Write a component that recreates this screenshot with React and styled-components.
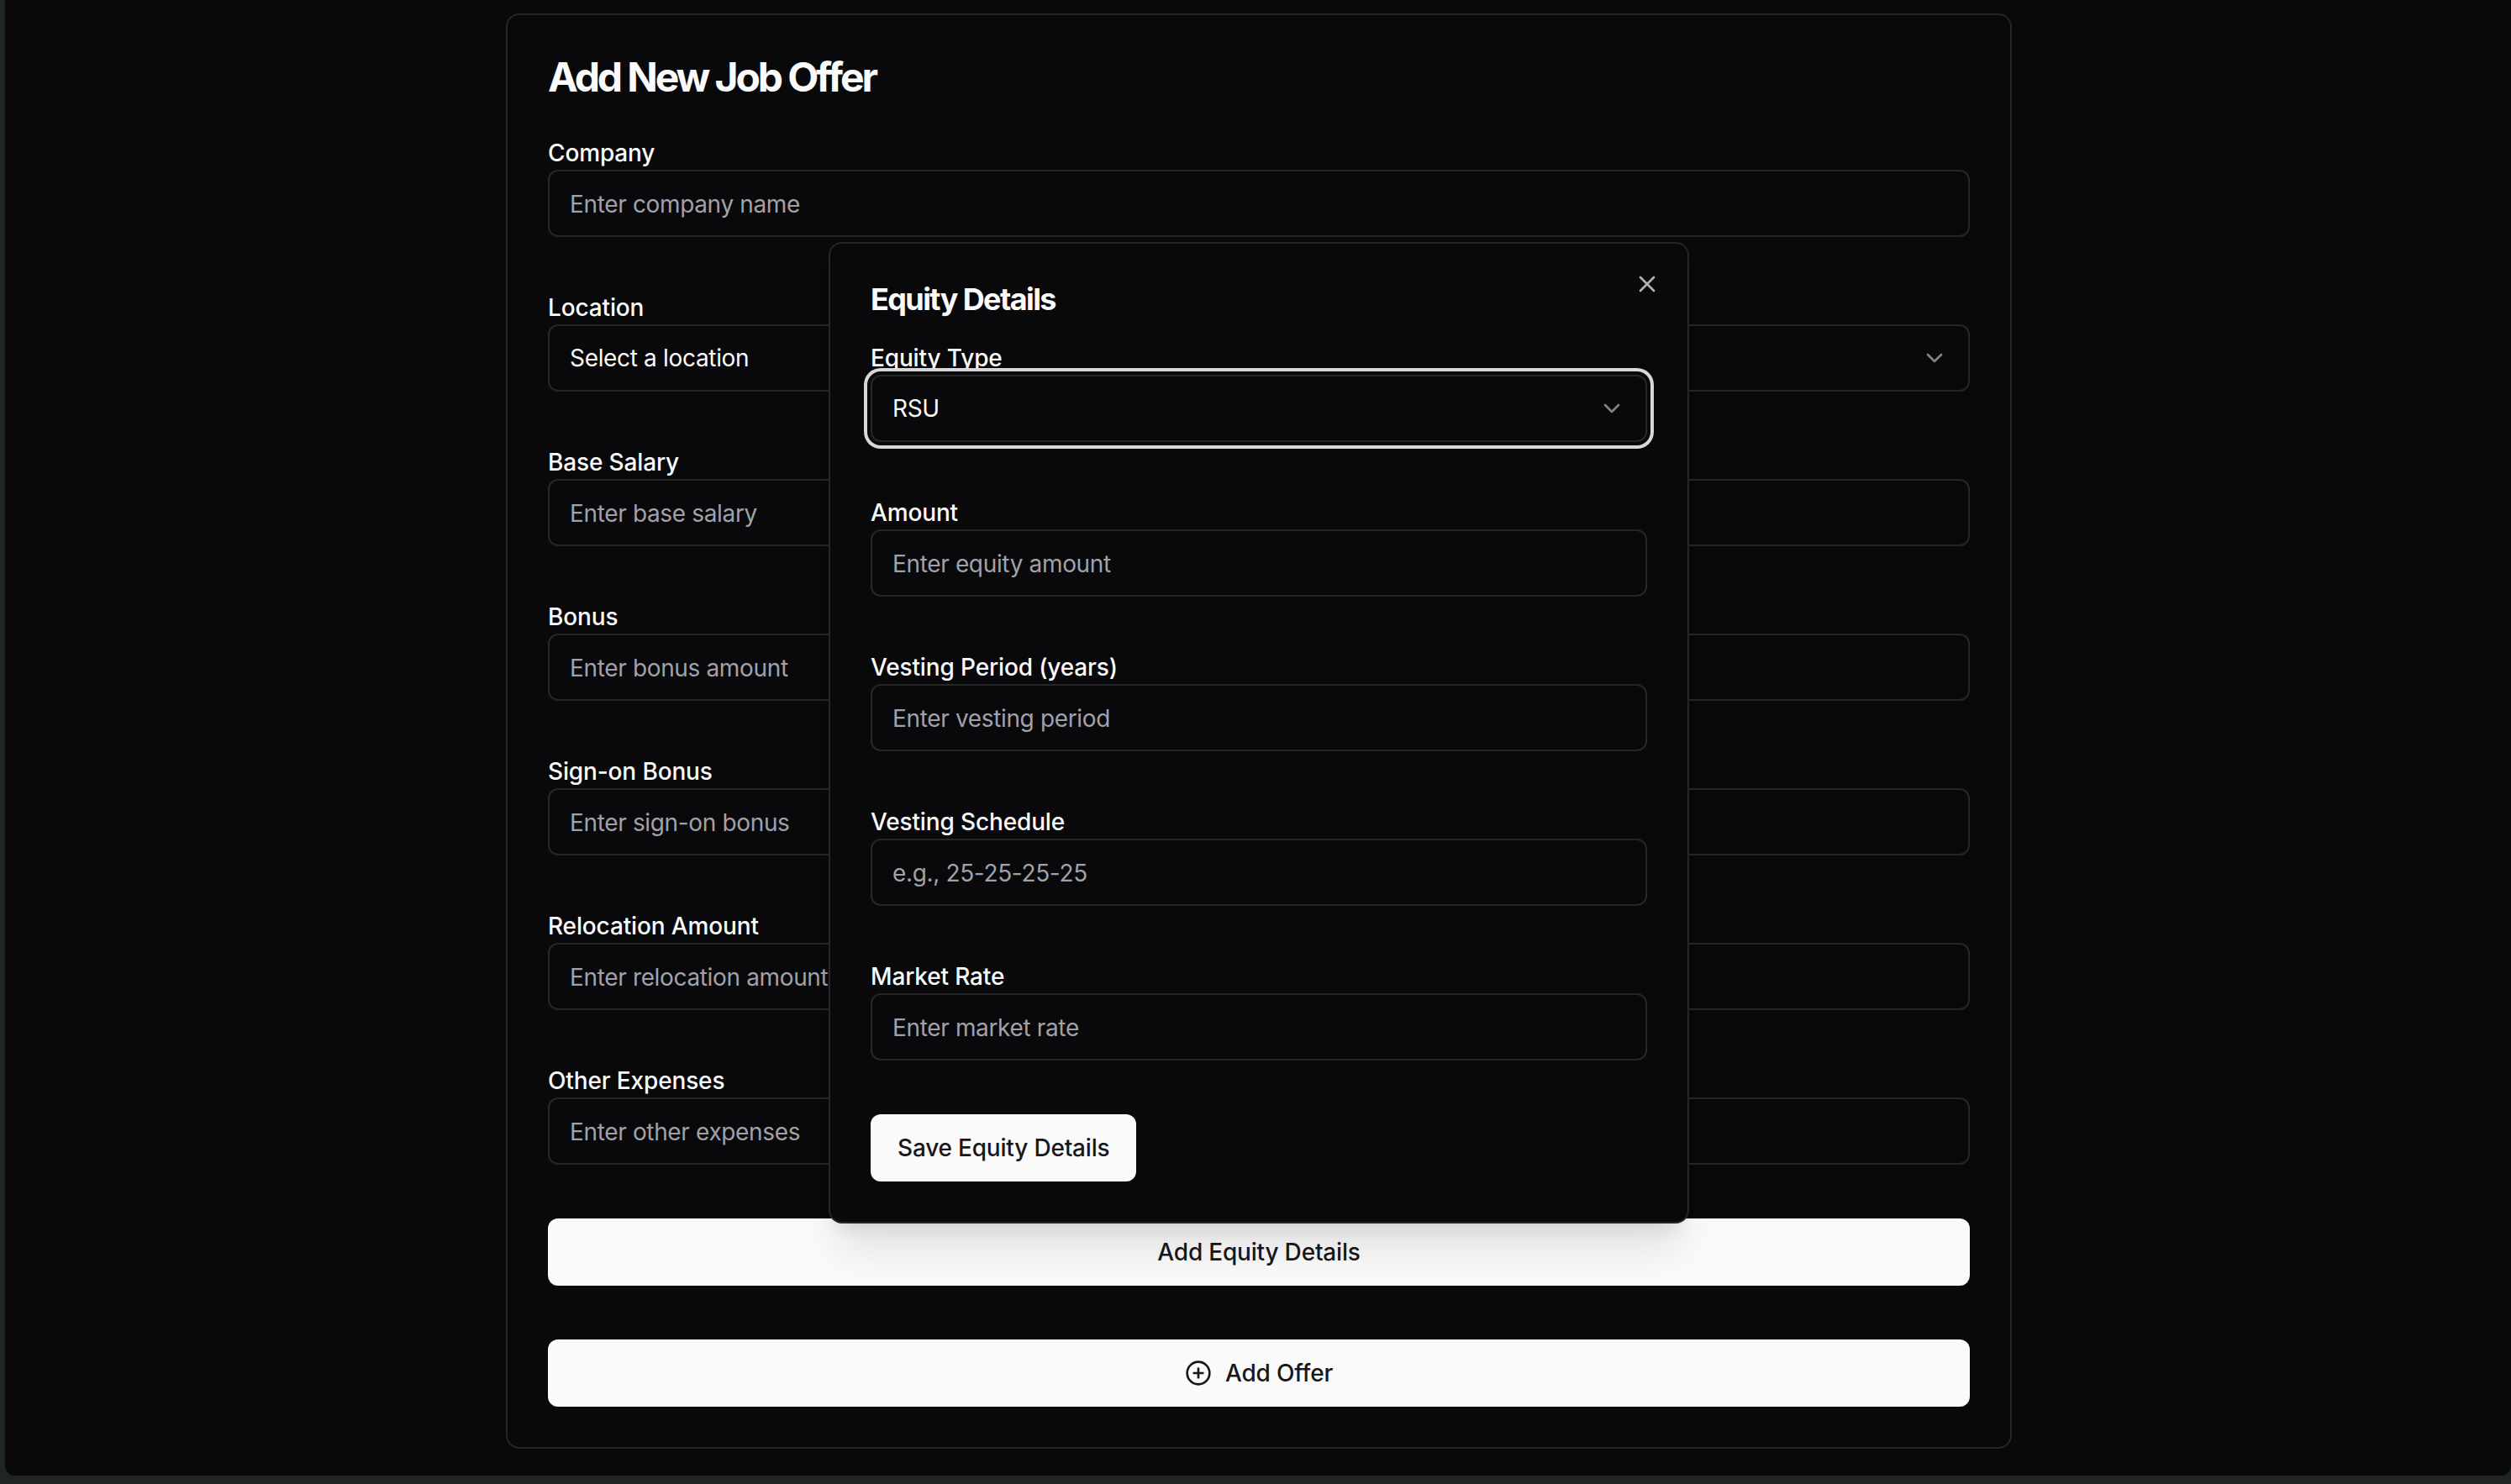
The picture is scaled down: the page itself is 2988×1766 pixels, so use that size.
import React from "react"
import styled, { createGlobalStyle } from "styled-components"
import { X, ChevronDown, CirclePlus } from "lucide-react"

const GlobalStyle = createGlobalStyle`
  html, body {
    margin: 0;
    padding: 0;
    background: #1f2524;
    font-family: Inter, "Noto Sans", sans-serif;
  }
  * {
    box-sizing: border-box;
  }
`

const offerFields = [
  { label: "Company", placeholder: "Enter company name" },
  { label: "Location", value: "Select a location", select: true },
  { label: "Base Salary", placeholder: "Enter base salary" },
  { label: "Bonus", placeholder: "Enter bonus amount" },
  { label: "Sign-on Bonus", placeholder: "Enter sign-on bonus" },
  { label: "Relocation Amount", placeholder: "Enter relocation amount" },
  { label: "Other Expenses", placeholder: "Enter other expenses" },
]

const equityFields = [
  { label: "Equity Type", value: "RSU", select: true, focused: true },
  { label: "Amount", placeholder: "Enter equity amount" },
  { label: "Vesting Period (years)", placeholder: "Enter vesting period" },
  { label: "Vesting Schedule", placeholder: "e.g., 25-25-25-25" },
  { label: "Market Rate", placeholder: "Enter market rate" },
]

const Field = ({ label, placeholder, value, select, focused }) => (
  <FieldWrapper>
    <Label>{label}</Label>
    {select ? (
      <SelectBox type="button" $focused={focused}>
        <span>{value}</span>
        <ChevronDown size={32} strokeWidth={2} />
      </SelectBox>
    ) : (
      <Input placeholder={placeholder} readOnly />
    )}
  </FieldWrapper>
)

const App = () => {
  return (
    <Window>
      <GlobalStyle />
      <Card>
        <Title>Add New Job Offer</Title>
        <FieldList>
          {offerFields.map(field => (
            <Field key={field.label} {...field} />
          ))}
        </FieldList>
        <Actions>
          <Button type="button">Add Equity Details</Button>
          <Button type="button">
            <CirclePlus size={32} strokeWidth={2} />
            Add Offer
          </Button>
        </Actions>
      </Card>

      <Modal>
        <CloseButton type="button" aria-label="Close">
          <X size={32} strokeWidth={2} />
        </CloseButton>
        <ModalTitle>Equity Details</ModalTitle>
        <FieldList>
          {equityFields.map(field => (
            <Field key={field.label} {...field} />
          ))}
        </FieldList>
        <ModalActions>
          <Button type="button" $compact>Save Equity Details</Button>
        </ModalActions>
      </Modal>
    </Window>
  )
}

export default App


const Window = styled.main`
  position: relative;
  height: 1756px;
  margin-left: 6px;
  padding: 16px 0 0 2px;
  background: #09090b;
  border-radius: 0 0 12px 12px;
  overflow: hidden;
`

const Card = styled.section`
  width: 1792px;
  margin: 0 auto;
  padding: 48px;
  border: 2px solid #27272a;
  border-radius: 16px;
  background: #09090b;
`

const Title = styled.h1`
  margin: 0 0 48px;
  font-size: 48px;
  line-height: 52px;
  font-weight: 700;
  letter-spacing: -3.1px;
  color: #fafafa;
`

const FieldList = styled.div`
  display: grid;
  row-gap: 68px;
`

const FieldWrapper = styled.div`
  display: grid;
  row-gap: 4px;
`

const Label = styled.label`
  font-size: 28px;
  line-height: 32px;
  font-weight: 500;
  letter-spacing: -0.14px;
  color: #fafafa;
`

const Input = styled.input`
  width: 100%;
  height: 80px;
  padding: 2px 24px 0;
  border: 2px solid #27272a;
  border-radius: 12px;
  background: #09090b;
  font-family: inherit;
  font-size: 28px;
  letter-spacing: -0.35px;
  color: #fafafa;
  outline: none;

  &::placeholder {
    color: #a1a1aa;
    opacity: 1;
  }
`

const SelectBox = styled.button`
  position: relative;
  display: flex;
  align-items: center;
  justify-content: space-between;
  width: 100%;
  height: 80px;
  padding: 0 24px;
  border: 2px solid #27272a;
  border-radius: 12px;
  background: #09090b;
  font-family: inherit;
  font-size: 28px;
  letter-spacing: -0.33px;
  color: #fafafa;
  box-shadow: ${props => props.$focused ? "0 0 0 4px #09090b, 0 0 0 8px #d8d8da" : "none"};

  svg {
    opacity: 0.5;
  }
`

const Actions = styled.div`
  display: grid;
  row-gap: 64px;
  margin-top: 64px;
`

const ModalActions = styled.div`
  margin-top: 64px;
`

const Button = styled.button`
  display: ${props => props.$compact ? "inline-flex" : "flex"};
  align-items: center;
  justify-content: center;
  gap: 16px;
  width: ${props => props.$compact ? "auto" : "100%"};
  height: 80px;
  padding: 0 32px;
  border: none;
  border-radius: 12px;
  background: #fafafa;
  font-family: inherit;
  font-size: 28px;
  font-weight: 500;
  letter-spacing: -0.2px;
  color: #18181b;
`

const Modal = styled.section`
  position: absolute;
  top: 288px;
  left: calc(50% + 1px);
  width: 1024px;
  padding: 48px;
  transform: translateX(-50%);
  border: 2px solid #27272a;
  border-radius: 16px;
  background: #09090b;
  box-shadow: 0 40px 50px -10px rgba(0, 0, 0, 0.1), 0 16px 20px -12px rgba(0, 0, 0, 0.1);
`

const ModalTitle = styled.h2`
  margin: 0 0 36px;
  font-size: 36px;
  line-height: 36px;
  font-weight: 700;
  letter-spacing: -1.6px;
  color: #fafafa;
`

const CloseButton = styled.button`
  position: absolute;
  top: 32px;
  right: 32px;
  display: flex;
  padding: 0;
  border: none;
  background: transparent;
  color: #fafafa;
  opacity: 0.7;
`
